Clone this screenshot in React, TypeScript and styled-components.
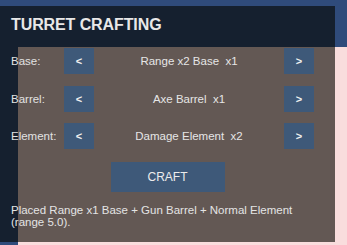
import React from "react";
import styled, { createGlobalStyle } from "styled-components";

const Global = createGlobalStyle`
  html, body {
    margin: 0;
    padding: 0;
    width: 347px;
    height: 245px;
    overflow: hidden;
  }
  body {
    background:
      linear-gradient(#f9dddd, #f9dddd) 18px 47px / 100% 100% no-repeat,
      #2f4b7b;
    font-family: "Liberation Sans", Arial, sans-serif;
  }
`;

const Panel = styled.div`
  margin-top: 6px;
  width: 335px;
  height: 236px;
  box-sizing: border-box;
  padding: 9px 21px 0 11px;
  background: rgba(7, 6, 0, 0.62);
  color: #e4e4e4;
  display: flex;
  flex-direction: column;
`;

const Title = styled.div`
  font-size: 16px;
  font-weight: bold;
  line-height: 20px;
  letter-spacing: -0.1px;
  color: #e8e8e8;
`;

const Rows = styled.div`
  margin-top: 13px;
  display: flex;
  flex-direction: column;
  gap: 11.5px;
`;

const Row = styled.div`
  display: grid;
  grid-template-columns: 53px 30px 1fr 30px;
  height: 26px;
  align-items: center;
  font-size: 11.5px;
`;

const Label = styled.span`
  color: #e2e2e2;
  white-space: nowrap;
`;

const Value = styled.span`
  text-align: center;
  white-space: pre;
  color: #e6e6e6;
`;

const ArrowButton = styled.button`
  all: unset;
  box-sizing: border-box;
  height: 26px;
  width: 30px;
  background: #3e5979;
  color: #f0f0f0;
  font-family: "Liberation Sans", Arial, sans-serif;
  font-weight: bold;
  font-size: 11px;
  display: flex;
  align-items: center;
  justify-content: center;
`;

const CraftButton = styled.button`
  all: unset;
  align-self: center;
  margin: 13px 0 0 10px;
  width: 114px;
  height: 30px;
  background: #3e5979;
  color: #ececec;
  font-family: "Liberation Sans", Arial, sans-serif;
  font-size: 12px;
  display: flex;
  align-items: center;
  justify-content: center;
`;

const Status = styled.p`
  margin: 12px 0 0 0;
  font-size: 11.5px;
  line-height: 12px;
  color: #e4e4e4;
`;

const rows = [
  { label: "Base:", value: "Range x2 Base  x1" },
  { label: "Barrel:", value: "Axe Barrel  x1" },
  { label: "Element:", value: "Damage Element  x2" },
];

export default function App() {
  return (
    <>
      <Global />
      <Panel>
        <Title>TURRET CRAFTING</Title>
        <Rows>
          {rows.map((r) => (
            <Row key={r.label}>
              <Label>{r.label}</Label>
              <ArrowButton>&lt;</ArrowButton>
              <Value>{r.value}</Value>
              <ArrowButton>&gt;</ArrowButton>
            </Row>
          ))}
        </Rows>
        <CraftButton>CRAFT</CraftButton>
        <Status>
          Placed Range x1 Base + Gun Barrel + Normal Element (range 5.0).
        </Status>
      </Panel>
    </>
  );
}
